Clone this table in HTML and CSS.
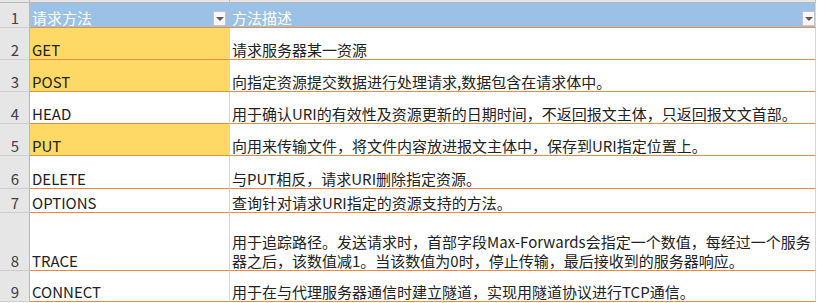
FILE: index.html
```html
<!DOCTYPE html>
<html lang="zh-CN">
<head>
<meta charset="utf-8">
<link rel="stylesheet" href="styles.css">
</head>
<body>
<div class="sheet">
  <div class="row strip">
    <div class="rh"></div><div class="ch"></div><div class="ch"></div><div class="fill"></div>
  </div>
  <div class="row r25 head">
    <div class="rh">1</div>
    <div class="c a hd"><span>请求方法</span><span class="flt"></span></div>
    <div class="c b hd"><span>方法描述</span><span class="flt last"></span></div>
    <div class="fill"></div>
  </div>
  <div class="row r32">
    <div class="rh">2</div>
    <div class="c a hi">GET</div>
    <div class="c b">请求服务器某一资源</div>
    <div class="fill"></div>
  </div>
  <div class="row r32">
    <div class="rh">3</div>
    <div class="c a hi">POST</div>
    <div class="c b">向指定资源提交数据进行处理请求,数据包含在请求体中。</div>
    <div class="fill"></div>
  </div>
  <div class="row r32">
    <div class="rh">4</div>
    <div class="c a">HEAD</div>
    <div class="c b">用于确认URI的有效性及资源更新的日期时间，不返回报文主体，只返回报文文首部。</div>
    <div class="fill"></div>
  </div>
  <div class="row r32">
    <div class="rh">5</div>
    <div class="c a hi">PUT</div>
    <div class="c b">向用来传输文件，将文件内容放进报文主体中，保存到URI指定位置上。</div>
    <div class="fill"></div>
  </div>
  <div class="row r33">
    <div class="rh">6</div>
    <div class="c a">DELETE</div>
    <div class="c b">与PUT相反，请求URI删除指定资源。</div>
    <div class="fill"></div>
  </div>
  <div class="row r24">
    <div class="rh">7</div>
    <div class="c a">OPTIONS</div>
    <div class="c b">查询针对请求URI指定的资源支持的方法。</div>
    <div class="fill"></div>
  </div>
  <div class="row r58">
    <div class="rh">8</div>
    <div class="c a">TRACE</div>
    <div class="c b"><span>用于追踪路径。发送请求时，首部字段Max-Forwards会指定一个数值，每经过一个服务<br>器之后，该数值减1。当该数值为0时，停止传输，最后接收到的服务器响应。</span></div>
    <div class="fill"></div>
  </div>
  <div class="row r31">
    <div class="rh">9</div>
    <div class="c a">CONNECT</div>
    <div class="c b">用于在与代理服务器通信时建立隧道，实现用隧道协议进行TCP通信。</div>
    <div class="fill"></div>
  </div>
</div>
</body>
</html>
```

FILE: styles.css
```css
* { box-sizing: border-box; }
html, body { margin: 0; padding: 0; background: #ffffff; }
body {
  font-family: "Noto Sans CJK SC", "Noto Sans", sans-serif;
  font-size: 15px;
  line-height: 19px;
  color: #222222;
  width: 818px;
  height: 303px;
  overflow: hidden;
}
.sheet { display: flex; flex-direction: column; }
.row {
  display: grid;
  grid-template-columns: 30px 200px 586px 1fr;
}
.strip { height: 3px; }
.r24 { height: 24px; }
.r25 { height: 25px; }
.r31 { height: 31px; }
.r32 { height: 32px; }
.r33 { height: 33px; }
.r58 { height: 58px; }

.rh {
  background: #e6e6e6;
  border-right: 1px solid #b9b9b9;
  border-bottom: 1px solid #cdcdcd;
  color: #404040;
  display: flex;
  align-items: flex-end;
  justify-content: center;
  padding-left: 1px;
}
.ch {
  background: #e6e6e6;
  border-right: 1px solid #c4c4c4;
  border-bottom: 1px solid #b9b9b9;
}
.strip .rh { border-bottom: 1px solid #b9b9b9; }

.c {
  display: flex;
  align-items: flex-end;
  padding-left: 2px;
  border-bottom: 1px solid #ec8b43;
  white-space: nowrap;
}
.a { border-right: 1px solid #d6d6d6; }
.b { border-right: 1px solid #d6d6d6; }
.hi { background: #ffd966; border-right-color: #ffd966; }

.hd {
  background: #9bc2e6;
  color: #ffffff;
  justify-content: space-between;
}
.a.hd { border-right-color: #9bc2e6; }
.flt {
  width: 13px;
  height: 15px;
  margin-right: 3px;
  margin-bottom: 1px;
  background: #f7f7f7;
  border: 1px solid #c3c3c3;
  position: relative;
}
.flt::after {
  content: "";
  position: absolute;
  left: 2px;
  top: 5px;
  border-left: 4px solid transparent;
  border-right: 4px solid transparent;
  border-top: 4px solid #595959;
}
.flt.last { margin-right: 0; }
.fill { background: #ffffff; }
```
